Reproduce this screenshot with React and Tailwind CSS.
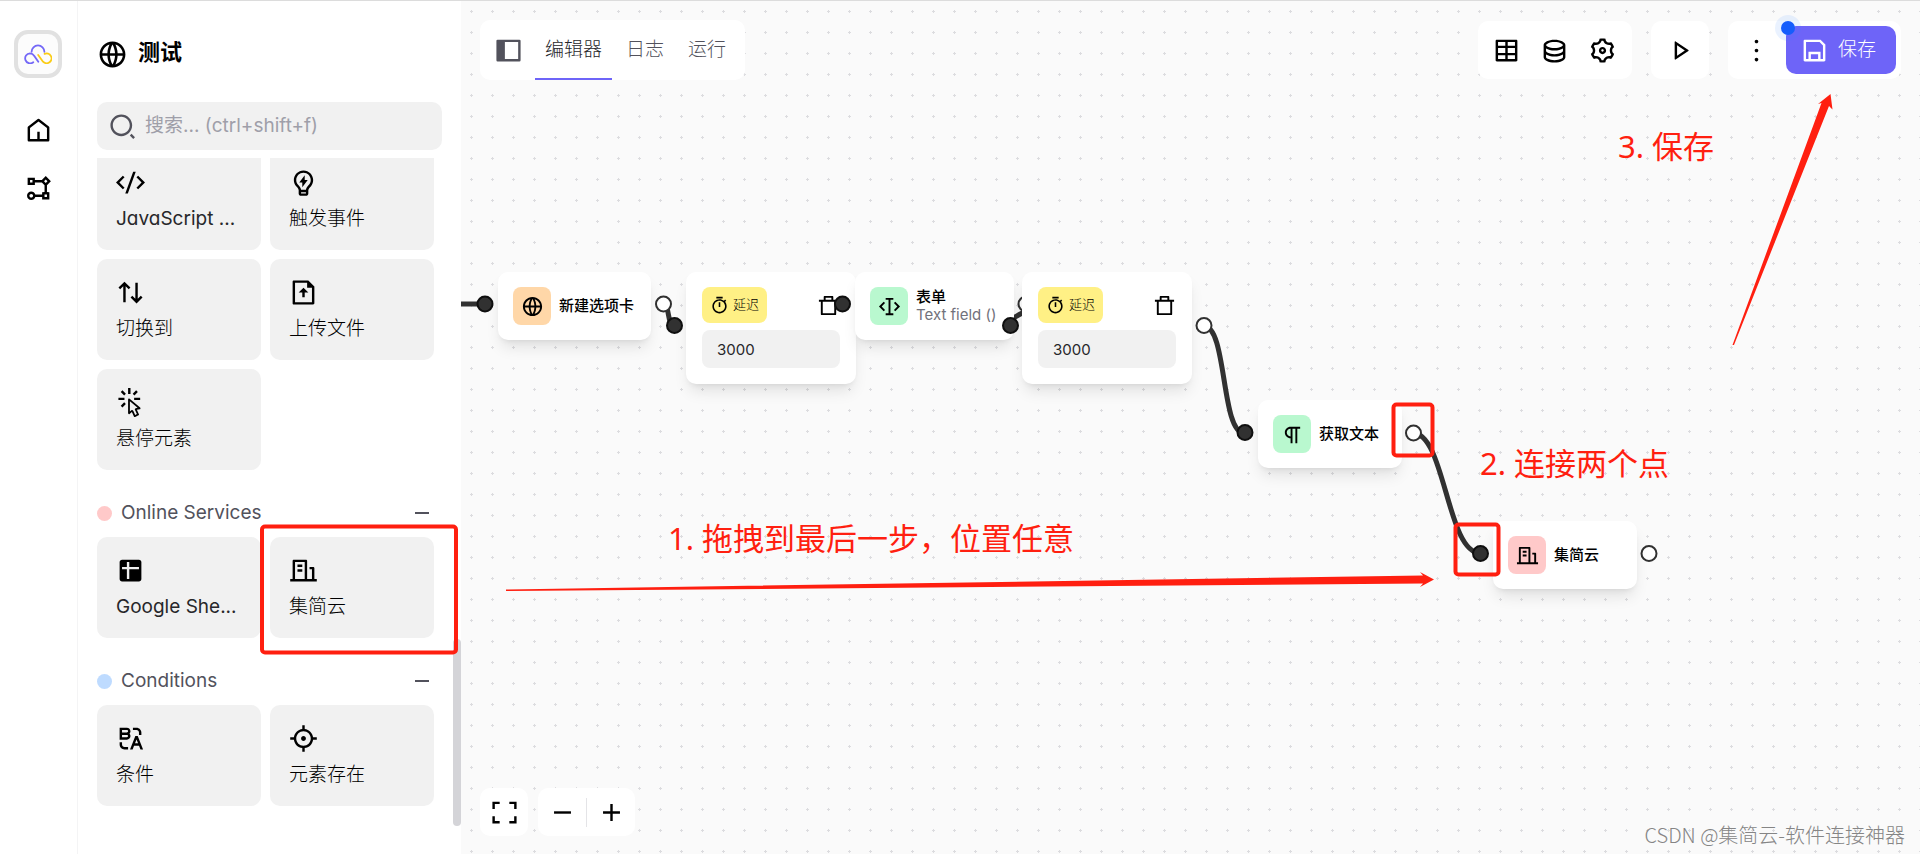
import React from 'react';
import {
  RiAddLine, RiArrowUpDownLine, RiBuildingLine, RiCodeSSlashLine, RiDatabase2Line, RiDeleteBin7Line,
  RiFileUploadLine, RiFlowChart, RiFocus3Line, RiFullscreenLine, RiGlobalLine, RiInputCursorMove,
  RiLightbulbFlashLine, RiMore2Line, RiParagraph, RiPlayLine, RiSaveLine, RiSearch2Line,
  RiSettings3Line, RiSubtractLine, RiTable2, RiTimerLine, RiAB
} from 'react-icons/ri';

const HomeIcon = ({ className }) => (
  <svg viewBox="0 0 24 24" fill="currentColor" className={className}>
    <path d="M21 20a1 1 0 0 1-1 1H4a1 1 0 0 1-1-1V9.49a1 1 0 0 1 .386-.79l8-6.222a1 1 0 0 1 1.228 0l8 6.222a1 1 0 0 1 .386.79V20zm-2-1V9.978l-7-5.444-7 5.444V19h6v-6h2v6h6z" />
  </svg>
);

const SidebarIcon = ({ className }) => (
  <svg viewBox="0 0 24 24" fill="currentColor" className={className}>
    <path d="M21 3a1 1 0 0 1 1 1v16a1 1 0 0 1-1 1H3a1 1 0 0 1-1-1V4a1 1 0 0 1 1-1h18zm-1 2H9v14h11V5z" />
  </svg>
);

const HoverIcon = ({ className }) => (
  <svg viewBox="0 0 24 24" fill="currentColor" className={className}>
    <path d="M11.5,11L17.88,16.37L17,16.55L16.36,16.67C15.73,16.8 15.37,17.5 15.65,18.07L15.92,18.65L17.28,21.59L15.86,22.25L14.5,19.32L14.24,18.74C13.97,18.15 13.22,17.97 12.72,18.38L12.21,18.78L11.5,19.35V11M10.76,8.69A0.76,0.76 0 0,0 10,9.45V20.9C10,21.32 10.34,21.66 10.76,21.66C10.95,21.66 11.11,21.6 11.24,21.5L13.15,19.95L14.81,23.57C14.94,23.84 15.21,24 15.5,24C15.61,24 15.72,24 15.83,23.92L18.59,22.64C18.97,22.46 19.15,22 18.95,21.63L17.28,18L19.69,17.55C19.85,17.5 20,17.43 20.12,17.29C20.39,16.97 20.35,16.5 20,16.21L11.26,8.86L11.25,8.87C11.12,8.76 10.95,8.69 10.76,8.69M15,10V8H20V10H15M13.83,4.76L16.66,1.93L18.07,3.34L15.24,6.17L13.83,4.76M10,0H12V5H10V0M3.93,14.66L6.76,11.83L8.17,13.24L5.34,16.07L3.93,14.66M3.93,3.34L5.34,1.93L8.17,4.76L6.76,6.17L3.93,3.34M7,10H2V8H7V10" />
  </svg>
);

const SheetsIcon = ({ className }) => (
  <svg viewBox="0 0 24 24" fill="currentColor" className={className}>
    <path d="M19 11V9h-8V5H9v4H5v2h4v8h2v-8h8m0-8c1.11 0 2 .89 2 2v14c0 1.11-.89 2-2 2H5c-1.1 0-2-.9-2-2V5c0-1.1.9-2 2-2h14Z" />
  </svg>
);

const Logo = () => (
  <svg viewBox="0 0 28 20" fill="none" strokeWidth="1.8" strokeLinecap="round" className="w-7 h-5">
    <path d="M7.600 7.800a6.400 6.400 0 0 1 12.800 0" stroke="#7468f7" />
    <path d="M9.300 18.300A5 5 0 1 1 6 9.400c2 0 3.300 1 4.300 2.500l4 5.900" stroke="#7468f7" />
    <path d="M20.600 9.900a4.900 4.900 0 1 1-1.600 7.800L14.200 11" stroke="#facc15" />
  </svg>
);

const generalBlocks = [
  { name: 'JavaScript ...', icon: RiCodeSSlashLine, nameClass: 'font-normal text-zinc-800' },
  { name: '触发事件', icon: RiLightbulbFlashLine },
  { name: '切换到', icon: RiArrowUpDownLine },
  { name: '上传文件', icon: RiFileUploadLine },
  { name: '悬停元素', icon: HoverIcon },
];

const categories = [
  {
    name: 'Online Services',
    color: 'bg-red-200',
    blocks: [
      { name: 'Google She...', icon: SheetsIcon, nameClass: 'font-normal text-zinc-800' },
      { name: '集简云', icon: RiBuildingLine },
    ],
  },
  {
    name: 'Conditions',
    color: 'bg-blue-200',
    blocks: [
      { name: '条件', icon: RiAB },
      { name: '元素存在', icon: RiFocus3Line },
    ],
  },
];

function BlockGrid({ blocks }) {
  return (
    <div className="grid grid-cols-2 gap-[9px]">
      {blocks.map(({ name, icon: Icon, nameClass = 'text-black' }) => (
        <div key={name} className="h-[101px] rounded-[10px] bg-[#f1f1f1] p-[19px] cursor-move">
          <Icon className="w-[29px] h-[29px] text-black" />
          <p className={`mt-2 text-[19px] leading-7 whitespace-nowrap ${nameClass}`}>{name}</p>
        </div>
      ))}
    </div>
  );
}

function IconButton({ icon: Icon, label }) {
  return (
    <button aria-label={label} className="flex w-12 h-12 items-center justify-center rounded-lg text-black">
      <Icon className="w-[29px] h-[29px]" />
    </button>
  );
}

function BasicNode({ icon: Icon, color, title, subtitle, className }) {
  return (
    <div className={`absolute flex h-[68px] items-center gap-2 rounded-[10px] bg-white px-[15px] shadow-lg ${className}`}>
      <span className={`flex w-[38px] h-[38px] shrink-0 items-center justify-center rounded-lg text-black ${color}`}>
        <Icon className="w-[23px] h-[23px]" />
      </span>
      <div className="whitespace-nowrap text-[15px] leading-[18px]">
        <p className="font-medium text-black">{title}</p>
        {subtitle && <p className="font-normal text-zinc-500">{subtitle}</p>}
      </div>
    </div>
  );
}

function DelayNode({ id, className }) {
  return (
    <div className={`absolute w-[170px] rounded-[10px] bg-white px-4 pt-[15px] pb-4 shadow-lg ${className}`}>
      <div className="flex items-center justify-between">
        <span className="flex h-9 items-center gap-1 rounded-lg bg-yellow-200 px-2 text-[13px] text-black">
          <RiTimerLine className="w-[19px] h-[19px]" />
          延迟
        </span>
        <button aria-label="删除" className="text-black">
          <RiDeleteBin7Line className="w-[23px] h-[23px]" />
        </button>
      </div>
      <input
        id={id}
        aria-label="延迟"
        defaultValue="3000"
        className="mt-[7px] block h-[38px] w-full rounded-lg bg-[#f1f1f1] px-[15px] text-[15px] font-normal"
      />
    </div>
  );
}

export default function App() {
  return (
    <div className="relative flex h-screen overflow-hidden border-t border-[#dcdcdc] bg-white font-light text-zinc-800 font-[Inter,'Noto_Sans_CJK_SC',sans-serif] [font-feature-settings:'cv11']">
      {/* App navigation */}
      <nav className="flex w-[78px] shrink-0 flex-col items-center border-r border-zinc-100 pt-[29px]">
        <div className="mr-px flex w-12 h-12 items-center justify-center rounded-[14px] border-4 border-[#e1e1e1] bg-[#fcfcfc]">
          <Logo />
        </div>
        <a href="#home" aria-label="首页" className="mt-[38px] text-black">
          <HomeIcon className="w-[29px] h-[29px]" />
        </a>
        <a href="#workflows" aria-label="工作流" className="mt-[29px] text-black">
          <RiFlowChart className="w-[29px] h-[29px]" />
        </a>
      </nav>

      {/* Block list */}
      <aside className="relative flex w-[383px] shrink-0 flex-col">
        <div className="flex items-center gap-[10px] px-[19px] pt-[37px]">
          <RiGlobalLine className="w-[31px] h-[31px] text-black" />
          <h1 className="pb-1 text-[22px] leading-7 font-bold text-black">测试</h1>
        </div>
        <label className="mx-[19px] mt-8 flex h-12 shrink-0 items-center gap-2 rounded-[10px] bg-[#f1f1f1] px-[11px]">
          <RiSearch2Line className="w-[29px] h-[29px] shrink-0 text-zinc-600" />
          <input
            type="search"
            aria-label="搜索"
            placeholder="搜索... (ctrl+shift+f)"
            className="w-full bg-transparent text-[19px] font-normal outline-none placeholder:text-zinc-400"
          />
        </label>
        <div className="mt-2 min-h-0 flex-1 overflow-hidden pl-[19px] pr-[27px]">
          <div className="-mt-[9px]">
            <BlockGrid blocks={generalBlocks} />
            {categories.map((category) => (
              <section key={category.name}>
                <div className="mt-7 mb-[9px] flex h-[30px] items-center text-[19px] text-zinc-600">
                  <span className={`mr-[9px] w-[15px] h-[15px] rounded-full ${category.color}`}></span>
                  <h2 className="flex-1 font-normal">{category.name}</h2>
                  <button aria-label="收起">
                    <RiSubtractLine className="w-6 h-6" />
                  </button>
                </div>
                <BlockGrid blocks={category.blocks} />
              </section>
            ))}
          </div>
        </div>
        <div className="absolute right-0 bottom-7 h-[187px] w-2 rounded-full bg-zinc-300"></div>
      </aside>

      {/* Workflow editor */}
      <main className="relative flex min-w-0 flex-1 flex-col justify-between overflow-hidden bg-[#fafafa]">
        <svg className="absolute inset-0 w-full h-full">
          <defs>
            <pattern id="grid" width="21" height="21" patternUnits="userSpaceOnUse">
              <path d="M9 10h3v1H9zM10 9h1v3h-1z" fill="#dcdcdf" />
            </pattern>
          </defs>
          <rect width="100%" height="100%" fill="url(#grid)" />
          {/* connections */}
          <g fill="none" stroke="#313131" strokeWidth="5">
            <path d="M0 303H24" />
            <path d="M202 303C209 303 206 325 213 325" />
            <path d="M565 303C572 314 540 316 549 325" />
            <path d="M743 325C766 325 760 432 783 432" />
            <path d="M952 432C984 432 986 552 1019 552" />
          </g>
          <g fill="#fff" stroke="#313131" strokeWidth="2">
            <circle cx="202.500" cy="303" r="7.500" />
            <circle cx="565" cy="303" r="7.500" />
            <circle cx="743" cy="324.500" r="7.500" />
            <circle cx="952.500" cy="432" r="7.500" />
            <circle cx="1188" cy="552.500" r="7.500" />
          </g>
        </svg>

        <BasicNode className="left-[37px] top-[271px] w-[153px]" icon={RiGlobalLine} color="bg-orange-200" title="新建选项卡" />
        <DelayNode id="delay-1" className="left-[225px] top-[271px]" />
        <BasicNode className="left-[394px] top-[271px] w-[159px]" icon={RiInputCursorMove} color="bg-green-200" title="表单" subtitle="Text field ()" />
        <DelayNode id="delay-2" className="left-[561px] top-[271px]" />
        <BasicNode className="left-[797px] top-[399px] w-[144px]" icon={RiParagraph} color="bg-green-200" title="获取文本" />
        <BasicNode className="left-[1032px] top-[520px] w-[144px]" icon={RiBuildingLine} color="bg-red-200" title="集简云" />

        <svg className="pointer-events-none absolute inset-0 w-full h-full">
          <g fill="#313131" stroke="#0f0f0f" strokeWidth="2">
            <circle cx="24" cy="303" r="7.500" />
            <circle cx="213.500" cy="324.500" r="7.500" />
            <circle cx="381.500" cy="303" r="7.500" />
            <circle cx="549.500" cy="324.500" r="7.500" />
            <circle cx="784" cy="431.500" r="7.500" />
            <circle cx="1019.500" cy="552.500" r="7.500" />
          </g>
        </svg>

        <header className="relative flex items-start justify-between px-[19px] pt-5">
          <div className="-mt-px flex h-[60px] items-stretch rounded-[10px] bg-white pl-[14px] pr-[9px]">
            <button aria-label="侧边栏" className="mr-3 text-zinc-600">
              <SidebarIcon className="w-[29px] h-[29px]" />
            </button>
            <div className="flex gap-1 text-[19px] text-zinc-600">
              <button className="border-y-2 border-t-transparent border-b-[#6e64f8] px-[10px] text-zinc-800">编辑器</button>
              <button className="border-y-2 border-transparent px-[10px]">日志</button>
              <button className="border-y-2 border-transparent px-[10px]">运行</button>
            </div>
          </div>
          <div className="flex gap-[19px]">
            <div className="flex rounded-[10px] bg-white p-[5px]">
              <IconButton icon={RiTable2} label="表格" />
              <IconButton icon={RiDatabase2Line} label="全局数据" />
              <IconButton icon={RiSettings3Line} label="设置" />
            </div>
            <div className="flex rounded-[10px] bg-white p-[5px]">
              <IconButton icon={RiPlayLine} label="执行" />
            </div>
            <div className="flex gap-[5px] rounded-[10px] bg-white p-[5px]">
              <IconButton icon={RiMore2Line} label="更多" />
              <button className="relative flex h-12 items-center gap-[9px] rounded-[10px] bg-[#6e64f8] pl-[14px] pr-5 text-[19px] text-white">
                <span className="absolute -left-[11px] -top-[11px] w-[26px] h-[26px] rounded-full bg-blue-500/10"></span>
                <span className="absolute -left-[5px] -top-[5px] w-[14px] h-[14px] rounded-full bg-blue-600"></span>
                <RiSaveLine className="w-[29px] h-[29px]" />
                保存
              </button>
            </div>
          </div>
        </header>

        <footer className="relative flex items-center gap-[10px] px-[19px] pb-[18px]">
          <div className="rounded-[10px] bg-white">
            <IconButton icon={RiFullscreenLine} label="适应屏幕" />
          </div>
          <div className="flex items-center rounded-[10px] bg-white">
            <IconButton icon={RiSubtractLine} label="缩小" />
            <span className="h-[29px] w-px bg-zinc-200"></span>
            <IconButton icon={RiAddLine} label="放大" />
          </div>
        </footer>
      </main>

      {/* Tutorial marks */}
      <div className="pointer-events-none absolute inset-0 text-[31px] leading-10 font-normal whitespace-nowrap text-[#ff1f10] font-['Noto_Sans','Noto_Sans_CJK_SC',sans-serif]">
        <svg className="absolute inset-0 w-full h-full">
          <g fill="none" stroke="#ff1f10" strokeWidth="4">
            <rect x="262" y="525.500" width="194" height="126" rx="3" />
            <rect x="1393.500" y="403.500" width="39" height="51" rx="3" />
            <rect x="1455.500" y="523.500" width="43" height="50" rx="3" />
          </g>
          <g fill="#ff1f10">
            <path d="M506 588.500L1423 574.500L1420 571L1434 578.500L1420 586L1423 582.500L506 590Z" />
            <path d="M1732.500 344L1821.500 102L1818 103L1830.500 93L1832.500 108.500L1829 105L1734 344Z" />
          </g>
        </svg>
        <p className="absolute left-[668px] top-[517px]">1. 拖拽到最后一步，位置任意</p>
        <p className="absolute left-[1480px] top-[442px]">2. 连接两个点</p>
        <p className="absolute left-[1618px] top-[125px]">3. 保存</p>
        <p className="absolute right-[15px] bottom-[5px] text-[20px] leading-7 font-light text-[#858585] font-['Noto_Sans_CJK_SC',sans-serif]">
          CSDN @集简云-软件连接神器
        </p>
      </div>
    </div>
  );
}
